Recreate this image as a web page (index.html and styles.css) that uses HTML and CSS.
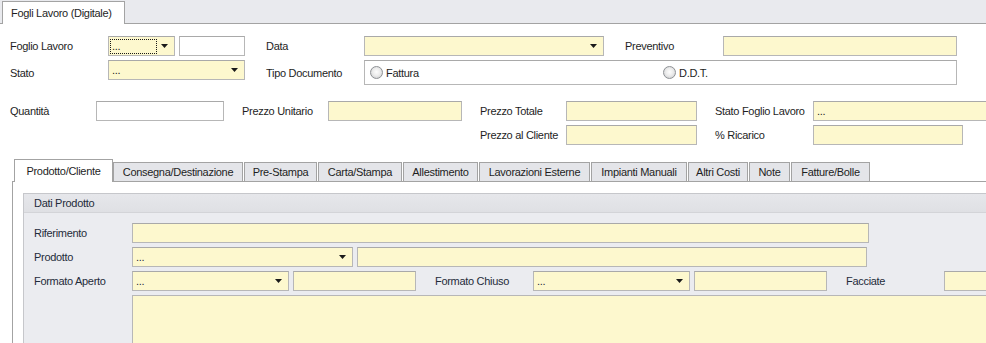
FILE: index.html
```html
<!DOCTYPE html>
<html lang="it">
<head>
    <meta charset="UTF-8">
    <title>Fogli Lavoro (Digitale)</title>
    <link rel="stylesheet" href="styles.css">
</head>
<body>
    <!-- Document tab strip -->
    <div class="doc-tabs">
        <div class="doc-tab">Fogli Lavoro (Digitale)</div>
    </div>

    <div class="sheet">
        <div class="head-grid">
            <span class="lbl">Foglio Lavoro</span>
            <div class="fld yellow combo"><span class="val focus">...</span><svg class="arrow" width="7" height="4"><polygon points="0,0 7,0 3.5,4"/></svg></div>
            <div class="fld col-4"></div>
            <span class="lbl col-6">Data</span>
            <div class="fld yellow combo"><span class="val"></span><svg class="arrow" width="7" height="4"><polygon points="0,0 7,0 3.5,4"/></svg></div>
            <span class="lbl col-9">Preventivo</span>
            <div class="fld yellow"></div>

            <span class="lbl">Stato</span>
            <div class="fld yellow combo span-stato"><span class="val">...</span><svg class="arrow" width="7" height="4"><polygon points="0,0 7,0 3.5,4"/></svg></div>
            <span class="lbl col-6">Tipo Documento</span>
            <div class="radio-box">
                <label class="radio"><i></i>Fattura</label>
                <label class="radio"><i></i>D.D.T.</label>
            </div>
        </div>

        <div class="price-grid">
            <span class="lbl">Quantità</span>
            <div class="fld"></div>
            <span class="lbl col-4">Prezzo Unitario</span>
            <div class="fld yellow"></div>
            <span class="lbl col-7">Prezzo Totale</span>
            <div class="fld yellow"></div>
            <span class="lbl col-10">Stato Foglio Lavoro</span>
            <div class="fld yellow combo"><span class="val">...</span></div>

            <span class="lbl col-7">Prezzo al Cliente</span>
            <div class="fld yellow"></div>
            <span class="lbl col-10">% Ricarico</span>
            <div class="fld yellow ricarico"></div>
        </div>

        <!-- Detail tabs -->
        <div class="tabstrip">
            <div class="tab active">Prodotto/Cliente</div>
            <div class="tab t-consegna">Consegna/Destinazione</div>
            <div class="tab t-prestampa">Pre-Stampa</div>
            <div class="tab t-carta">Carta/Stampa</div>
            <div class="tab t-allest">Allestimento</div>
            <div class="tab t-lavor">Lavorazioni Esterne</div>
            <div class="tab t-impianti">Impianti Manuali</div>
            <div class="tab t-altri">Altri Costi</div>
            <div class="tab t-note">Note</div>
            <div class="tab t-fatture">Fatture/Bolle</div>
        </div>

        <div class="tab-panel">
            <div class="group">
                <div class="group-head">Dati Prodotto</div>
                <div class="group-body">
                    <div class="g-row">
                        <span class="lbl">Riferimento</span>
                        <div class="fld yellow w-rif"></div>
                    </div>
                    <div class="g-row">
                        <span class="lbl">Prodotto</span>
                        <div class="fld yellow combo w-prod"><span class="val">...</span><svg class="arrow" width="7" height="4"><polygon points="0,0 7,0 3.5,4"/></svg></div>
                        <div class="fld yellow w-prod-desc"></div>
                    </div>
                    <div class="g-row">
                        <span class="lbl">Formato Aperto</span>
                        <div class="fld yellow combo w-fmt"><span class="val">...</span><svg class="arrow" width="7" height="4"><polygon points="0,0 7,0 3.5,4"/></svg></div>
                        <div class="fld yellow w-fmt-a"></div>
                        <span class="lbl sep">Formato Chiuso</span>
                        <div class="fld yellow combo w-fmt"><span class="val">...</span><svg class="arrow" width="7" height="4"><polygon points="0,0 7,0 3.5,4"/></svg></div>
                        <div class="fld yellow w-fmt-c"></div>
                        <span class="lbl sep">Facciate</span>
                        <div class="fld yellow w-facc"></div>
                    </div>
                    <div class="memo"></div>
                </div>
            </div>
        </div>
    </div>
</body>
</html>
```

FILE: styles.css
```css
* {
    box-sizing: border-box;
}

body {
    margin: 0;
    width: 986px;
    height: 343px;
    overflow: hidden;
    background: #fff;
    color: #1e1e1e;
    font-family: "Liberation Sans", Arial, sans-serif;
    font-size: 11px;
    letter-spacing: -0.3px;
    white-space: nowrap;
}

/* top document tabs */
.doc-tabs {
    height: 24px;
    background: #e9eaee;
    border-bottom: 1px solid #a3a3a3;
    padding-left: 2px;
    display: flex;
    align-items: flex-end;
}

.doc-tab {
    width: 123px;
    height: 23px;
    margin-bottom: -1px;
    padding-left: 8px;
    border: 1px solid #a3a3a3;
    border-bottom: 0;
    background: #fff;
    line-height: 22px;
}

.sheet {
    padding: 12px 0 0 10px;
}

.lbl {
    align-self: center;
    line-height: 20px;
}

/* fields */
.fld {
    height: 20px;
    border: 1px solid #b7b7b7;
    border-top-color: #a9a9a9;
    background: #fff;
    padding-left: 3px;
    line-height: 18px;
}

.yellow {
    background: #fdf8ce;
}

.combo {
    display: flex;
    align-items: center;
    justify-content: space-between;
    padding-right: 6px;
}

.arrow {
    fill: #1a1a1a;
    flex: none;
}

.val.focus {
    margin-left: -2px;
    width: 47px;
    height: 15px;
    padding-left: 1px;
    border: 1px dotted #1a1a1a;
    line-height: 13px;
}

/* header grid */
.head-grid {
    display: grid;
    grid-template-columns: 98px 67px 4px 66px 21px 98px 240px 21px 98px 234px;
    grid-template-rows: 20px 25px;
    row-gap: 4px;
}

.col-4 { grid-column: 4; }
.col-6 { grid-column: 6; }
.col-7 { grid-column: 7; }
.col-9 { grid-column: 9; }
.col-10 { grid-column: 10; }

.span-stato {
    grid-column: 2 / 5;
}

.radio-box {
    grid-column: 7 / 11;
    height: 25px;
    border: 1px solid #b7b7b7;
    border-top-color: #a9a9a9;
    padding-left: 5px;
    display: grid;
    grid-template-columns: 293px 1fr;
    align-items: center;
}

.radio {
    display: flex;
    align-items: center;
    gap: 3px;
}

.radio i {
    width: 13px;
    height: 13px;
    border-radius: 50%;
    border: 1px solid #8e9195;
    background: radial-gradient(circle at 50% 45%, #fdfdfd 0, #ececec 45%, #c4c6c9 100%);
}

/* price grid */
.price-grid {
    margin-top: 16px;
    display: grid;
    grid-template-columns: 86px 128px 18px 86px 134px 18px 86px 131px 18px 98px 220px;
    grid-template-rows: 20px 20px;
    row-gap: 4px;
}

.ricarico {
    grid-column: 11;
    width: 150px;
}

/* detail tabs */
.tabstrip {
    margin: 14px 0 0 2px;
    padding-left: 2px;
    height: 23px;
    border-bottom: 1px solid #a3a3a3;
    display: flex;
    align-items: flex-end;
}

.tab {
    flex: none;
    overflow: hidden;
    height: 19px;
    margin-right: 1px;
    border: 1px solid #a3a3a3;
    border-bottom: 0;
    background: #e4e5e9;
    text-align: center;
    line-height: 18px;
}

.tab.active {
    width: 99px;
    height: 23px;
    margin: 0 0 -1px 0;
    background: #fff;
    line-height: 22px;
}

.t-consegna { width: 130px; }
.t-prestampa { width: 73px; }
.t-carta { width: 84px; }
.t-allest { width: 75px; }
.t-lavor { width: 111px; }
.t-impianti { width: 96px; }
.t-altri { width: 60px; }
.t-note { width: 41px; }
.t-fatture { width: 79px; }

.tab-panel {
    margin-left: 2px;
    border-left: 1px solid #a3a3a3;
    padding: 11px 0 0 10px;
    height: 200px;
}

/* group box */
.group {
    width: 1000px;
    border: 1px solid #c6c7cb;
    background: #ebecf0;
    color: #1f2b3a;
}

.group-head {
    height: 19px;
    padding-left: 10px;
    line-height: 18px;
    border-bottom: 1px solid #d3d4d8;
    background: linear-gradient(#e6e7eb, #dfe0e4);
}

.group-body {
    padding: 10px 0 0 10px;
    display: flex;
    flex-direction: column;
    gap: 4px;
}

.g-row {
    display: flex;
    gap: 4px;
}

.g-row > * {
    flex: none;
}

.g-row .lbl:first-child {
    width: 94px;
}

.g-row .sep {
    width: 94px;
    margin-left: 15px;
}

.w-rif { width: 737px; }
.w-prod { width: 221px; }
.w-prod-desc { width: 510px; }
.w-fmt { width: 157px; }
.w-fmt-a { width: 123px; }
.w-fmt-c { width: 133px; }
.w-facc { width: 100px; }

.memo {
    margin-left: 98px;
    height: 60px;
    border: 1px solid #b7b7b7;
    background: #fdf8ce;
}
```
